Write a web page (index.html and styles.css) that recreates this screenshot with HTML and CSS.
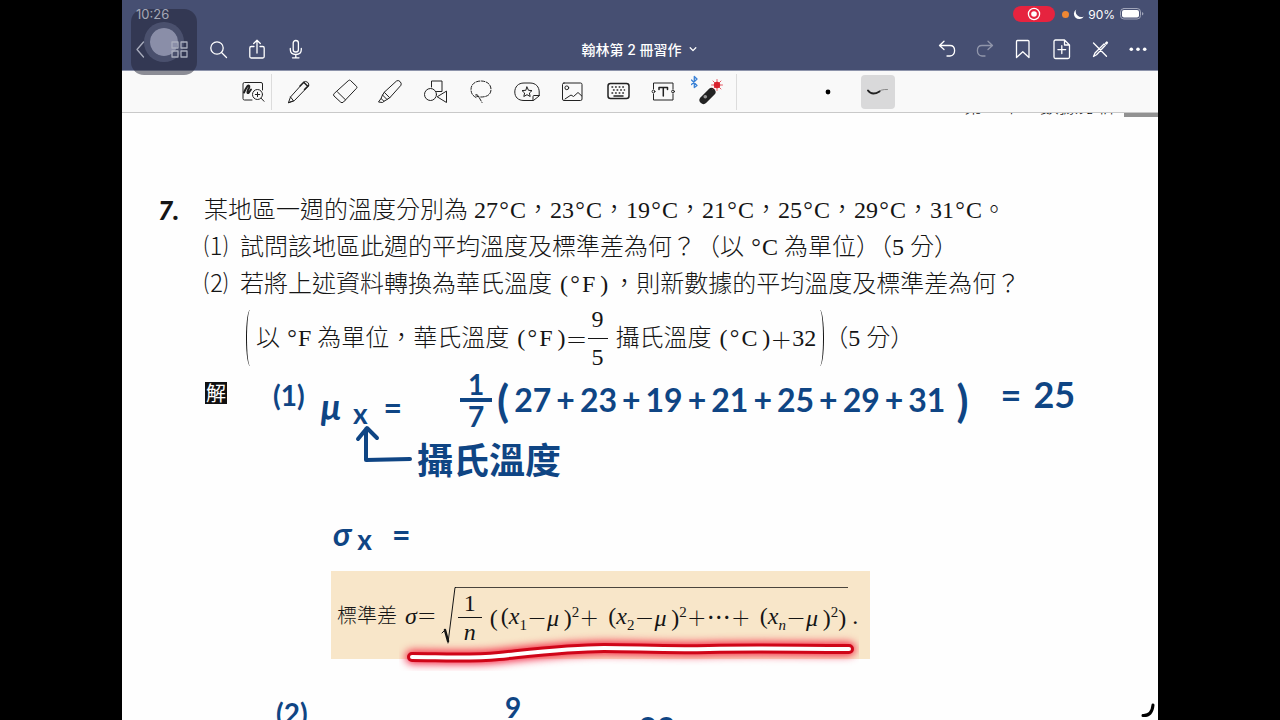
FILE: index.html
```html
<!DOCTYPE html>
<html lang="zh-Hant">
<head>
    <meta charset="UTF-8">
    <meta name="viewport" content="width=device-width, initial-scale=1.0">
    <title>翰林第2冊習作</title>
    <link rel="stylesheet" href="styles.css">
</head>
<body>
    <div class="tablet">
        <header class="topbar">
            <div class="status">
                <span>10:26</span>
                <div class="status-right">
                    <span class="recording">
                        <svg width="14" height="14" viewBox="0 0 14 14"><circle cx="7" cy="7" r="5.6" fill="none" stroke="#fff" stroke-width="1.3"/><circle cx="7" cy="7" r="2.8" fill="#fff"/></svg>
                    </span>
                    <span class="mic-dot"></span>
                    <svg class="moon" width="11" height="11" viewBox="0 0 11 11"><path d="M3.2 0.4A5.300 5.300 0 1 0 10.800 7.400A5.500 5.500 0 0 1 3.200 0.400Z" fill="#fff"/></svg>
                    <span>90%</span>
                    <svg class="battery" width="24" height="12" viewBox="0 0 24 12"><rect x="0.5" y="0.5" width="20" height="10.5" rx="3.4" fill="none" stroke="#a0a5b9"/><rect x="2" y="2" width="17" height="7.5" rx="2" fill="#fff"/><path d="M22 4v3.6q1.4-.5 1.4-1.8T22 4Z" fill="#a0a5b9"/></svg>
                </div>
            </div>
            <nav class="nav">
                <div class="nav-left">
                    <button aria-label="Back"><svg viewBox="0 0 24 24"><path d="M15.5 5L9 12.5L15.5 20"/></svg></button>
                    <button aria-label="Pages"><svg viewBox="0 0 24 24"><rect x="5" y="5" width="6" height="6"/><rect x="14" y="5" width="6" height="6"/><rect x="5" y="14" width="6" height="6"/><rect x="14" y="14" width="6" height="6"/></svg></button>
                    <button aria-label="Search"><svg viewBox="0 0 24 24"><circle cx="11" cy="11" r="6.2"/><path d="M15.5 15.5L20.5 20.5"/></svg></button>
                    <button aria-label="Share"><svg viewBox="0 0 24 24"><path d="M9 9.5H6.2Q4.8 9.5 4.8 11V19.5Q4.8 21 6.2 21H17.8Q19.2 21 19.2 19.5V11Q19.2 9.5 17.8 9.5H15M12 16V3.5M8.7 6.5L12 3.2L15.3 6.5"/></svg></button>
                    <button aria-label="Record"><svg viewBox="0 0 24 24"><rect x="9.2" y="3.5" width="5.2" height="11.5" rx="2.6"/><path d="M6.3 11.5V12.5Q6.3 17.5 11.8 17.5T17.3 12.5V11.5M11.8 17.5V20.5M8.5 20.8H15"/></svg></button>
                </div>
                <button class="doc-title">翰林第 2 冊習作 <svg width="8" height="8" viewBox="0 0 8 8"><path d="M1.2 2.8L4 5.6L6.8 2.8"/></svg></button>
                <div class="nav-right">
                    <button aria-label="Undo"><svg viewBox="0 0 24 24"><path d="M8 4.2L3.500 8.500L8 12.500M3.700 8.500H14Q18.600 8.500 18.600 13.500T14 19H11"/></svg></button>
                    <button aria-label="Redo" disabled><svg viewBox="0 0 24 24"><path d="M14 4.2L18.500 8.500L14 12.500M18.300 8.500H8Q3.400 8.500 3.400 13.500T8 19H11"/></svg></button>
                    <button aria-label="Bookmark"><svg viewBox="0 0 24 24"><path d="M4.500 4.500Q4.500 3.500 5.500 3.500H16Q17 3.500 17 4.500V20.500L10.800 14.800L4.500 20.500Z"/></svg></button>
                    <button aria-label="Add page"><svg viewBox="0 0 24 24"><path d="M14.5 3H5.5Q4 3 4 4.5V20Q4 21.5 5.5 21.5H18Q19.5 21.5 19.5 20V8ZM14.5 3V8H19.5M11.8 8.7V16.5M7.9 12.6H15.7"/></svg></button>
                    <button aria-label="Read only"><svg viewBox="0 0 24 24"><path d="M5.500 6L18.500 19.300M5.500 19.500L7 16L16 7L17.300 8.300L8.500 17.800ZM17.500 6.200L18.800 5L19.500 5.700L18.500 7"/></svg></button>
                    <button aria-label="More"><svg viewBox="0 0 24 24"><g class="solid"><circle cx="5.3" cy="12.2" r="1.8"/><circle cx="12" cy="12.2" r="1.8"/><circle cx="18.7" cy="12.2" r="1.8"/></g></svg></button>
                </div>
            </nav>
            <div class="assistive"><span></span></div>
        </header>

        <div class="tools">
            <div class="tool-zoom">
                <button aria-label="Zoom window"><svg viewBox="0 0 28 28"><path d="M23.500 12V6Q23.500 4.500 22 4.500H5.500Q4 4.500 4 6V20.500Q4 22 5.500 22H13"/><path class="thick" d="M5 14.500Q8.500 6.500 10 7.700Q11 8.500 9 12Q7.700 15.500 9.500 15L12 11.500"/><circle cx="18.500" cy="16.500" r="5"/><path d="M22.200 20.300L25 23.300M18.500 14.300V18.700M16.300 16.500H20.700"/></svg></button>
            </div>
            <div class="tool-list">
                <button aria-label="Pen"><svg viewBox="0 0 28 28"><path d="M3.500 24.500L5.500 19L18.500 4.500Q20.500 2.500 22.500 4.200T23.500 8L9.500 22.500ZM3.500 24.500L8.500 22.800L5.500 19"/><path class="medium" d="M15 8L19 4M19.500 11.500L23.500 7.500M19 4.500L22.500 8"/></svg></button>
                <button aria-label="Eraser"><svg viewBox="0 0 28 28"><path d="M17.500 2.500Q18.500 1.500 19.500 2.500L25.500 8.300Q26.500 9.300 25.500 10.300L12.500 24Q11 25.500 9.500 24L3 18Q1.800 17 3 15.700ZM6.500 14L14.500 21.800"/></svg></button>
                <button aria-label="Highlighter"><svg viewBox="0 0 28 28"><path d="M8.500 14L20.500 3Q22.200 1.800 24 3.500T25 7.200L14 19.500ZM8.500 14L6.500 17L11 21.500L14 19.500M6.500 17L5 20.500L8 23.300L11 21.500M5 20.500L2.500 24L6.500 24.500L8 23.300"/></svg></button>
                <button aria-label="Shapes"><svg viewBox="0 0 28 28"><path d="M9.5 9V3H20V13.500H14.500"/><circle cx="8.500" cy="16.500" r="6"/><path d="M24.500 13.500V24.500L15.500 19Z"/></svg></button>
                <button aria-label="Lasso"><svg viewBox="0 0 28 28"><path stroke-dasharray="3.500 1.500" d="M9 19.500Q4 17 4 11.500C4 6 8.500 3 14 3S24 6 24 11.500S19.500 19 14 19Q9 19 8.500 17Q9 15.500 11 17.500L15 24.500"/></svg></button>
                <button aria-label="Stickers"><svg viewBox="0 0 28 28"><path d="M20 22.500H11C5 22.500 1.800 19 1.800 14S5 5 11 5H17C23 5 26.200 9 26.200 14V17.500ZM20 22.500V18.500Q20 17.500 21 17.500H26.200M14 9L15.500 12.300L19 12.600L16.400 15L17.200 18.500L14 16.700L10.800 18.500L11.600 15L9 12.600L12.500 12.300Z"/></svg></button>
                <button aria-label="Image"><svg viewBox="0 0 28 28"><rect x="4.500" y="5" width="19.500" height="17.500" rx="1.500"/><circle cx="8.800" cy="9.800" r="1.900"/><path d="M7 21L13 17L15.500 18.500L20 14.500L23.800 18"/></svg></button>
                <button aria-label="Keyboard"><svg viewBox="0 0 28 28"><rect class="medium" x="4" y="5.500" width="21" height="15" rx="2.500"/><path class="medium" stroke-dasharray="0.600 3" d="M8 9H22M9.500 12H20.500M8 15H22"/><path class="medium" d="M10 18H19"/></svg></button>
                <button aria-label="Text"><svg viewBox="0 0 28 28"><path d="M4.500 11V5H24V11M4.500 16V22H24V16"/><circle cx="4.500" cy="13.500" r="1.400"/><circle cx="24" cy="13.500" r="1.400"/><path class="medium" d="M10 11.500V9.500H18.500V11.500M14.300 9.500V18"/></svg></button>
                <button class="laser" aria-label="Laser pointer"><svg viewBox="0 0 36 36"><path d="M0.500 6L6 11.500L3.300 13.500V2.500L6 5L0.500 10.500" stroke="#3b82d6" stroke-width="1.300"/><path d="M12.500 26L20.500 18" stroke="#232323" stroke-width="8"/><circle cx="14.300" cy="22.800" r="1.800" fill="#999" stroke="none"/><path d="M26 5.500V16.500M20.500 11H31.500M22 7L30 15M30 7L22 15" stroke="#e65a66"/><circle cx="26" cy="11" r="3.200" fill="#d9212d" stroke="none"/></svg></button>
            </div>
            <div class="tool-stroke">
                <button aria-label="Dot size"><svg viewBox="0 0 28 28"><circle cx="14" cy="14" r="2.400" fill="#000" stroke="none"/></svg></button>
                <button class="selected" aria-label="Stroke style"><svg viewBox="0 0 28 28"><path d="M13 15Q16 11 23.500 11.500" stroke="#888"/><path class="thick" d="M4 12.500Q8 18 15.500 13.500"/></svg></button>
            </div>
        </div>

        <main class="sheet">
            <div class="running-head"><span>第 1 章　數據分析</span><i></i></div>

            <section class="question">
                <div class="number">7.</div>
                <div class="body">
                    <p>某地區一週的溫度分別為 27<b>°</b>C，23<b>°</b>C，19<b>°</b>C，21<b>°</b>C，25<b>°</b>C，29<b>°</b>C，31<b>°</b>C。</p>
                    <p class="part"><span>⑴</span><span>試問該地區此週的平均溫度及標準差為何？（以 <b>°</b>C 為單位）（5 分）</span></p>
                    <p class="part"><span>⑵</span><span>若將上述資料轉換為華氏溫度<span class="unit">(<b>°</b>F&thinsp;)</span>，則新數據的平均溫度及標準差為何？</span></p>
                    <p class="formula-note">
                        <i class="big-paren"></i>
                        <span>以 <b>°</b>F 為單位，華氏溫度<span class="unit">(<b>°</b>F&thinsp;)</span></span>
                        <span class="math">＝</span>
                        <span class="fraction"><span>9</span><span>5</span></span>
                        <span class="celsius">攝氏溫度<span class="unit">(<b>°</b>C&thinsp;)</span></span>
                        <span class="math">＋</span>
                        <span>32</span>
                        <i class="big-paren close"></i>
                        <span>（5 分）</span>
                    </p>
                </div>
            </section>

            <section class="answer">
                <span class="solve">解</span>
                <div class="ink">
                    <div class="ink-row mean">
                        <span class="item">(1)</span>
                        <span class="symbol"><em>μ</em><sub>x</sub></span>
                        <span class="equals">=</span>
                        <span class="fraction"><span>1</span><span>7</span></span>
                        <span class="sum"><span class="tall">(</span><span>27</span><span>+</span><span>23</span><span>+</span><span>19</span><span>+</span><span>21</span><span>+</span><span>25</span><span>+</span><span>29</span><span>+</span><span>31</span><span class="tall close">)</span></span>
                        <span class="result"><span>=</span><span>25</span></span>
                    </div>
                    <div class="ink-row label">
                        <svg width="58" height="40" viewBox="0 0 58 40"><path d="M3 14L12 3L22 13M11 4V35L55 34"/></svg>
                        <span>攝氏溫度</span>
                    </div>
                    <div class="ink-row sigma">
                        <span class="symbol"><em>σ</em><sub>x</sub></span>
                        <span class="equals">=</span>
                    </div>
                </div>
            </section>

            <section class="formula">
                <span class="term">標準差</span>
                <em>σ</em>
                <span class="math">＝</span>
                <svg class="root" width="15" height="60" viewBox="0 0 15 60"><path d="M1 46L4 43" stroke-width="1"/><path d="M4 43L7 54" stroke-width="2.500"/><path d="M7 56L14 0.500H15" stroke-width="1"/></svg>
                <span class="radicand">
                    <span class="fraction"><span>1</span><span><em>n</em></span></span>
                    <span class="group">(</span>
                    <span class="group">(<em>x</em><sub>1</sub></span><span class="math">－</span><span><em>μ</em>&thinsp;)<sup>2</sup></span><span class="math">＋</span>
                    <span class="group wide">(<em>x</em><sub>2</sub></span><span class="math">－</span><span><em>μ</em>&thinsp;)<sup>2</sup></span><span class="math">＋</span><span>⋯</span><span class="math">＋</span>
                    <span class="group wide">(<em>x</em><sub><em>n</em></sub></span><span class="math">－</span><span><em>μ</em>&thinsp;)<sup>2</sup></span><span>)</span>
                </span>
                <span class="stop">.</span>
                <svg class="laser-line" width="460" height="40" viewBox="0 0 460 40">
                    <path class="glow" d="M13 26C40 26 70 28 100 25S170 17 205 17S260 19 310 18S400 18 450 18"/>
                    <path class="edge" d="M13 26C40 26 70 28 100 25S170 17 205 17S260 19 310 18S400 18 450 18"/>
                    <path class="core" d="M13 26C40 26 70 28 100 25S170 17 205 17S260 19 310 18S400 18 450 18"/>
                </svg>
            </section>

            <section class="ink ink-row next">
                <span class="item">(2)</span>
                <span class="symbol"><em>μ</em><sub>y</sub></span>
                <span class="equals">=</span>
                <span class="fraction"><span>9</span><span>5</span></span>
                <span class="symbol"><em>μ</em><sub>x</sub></span>
                <span class="plus">+</span>
                <span class="constant">32</span>
            </section>
            <svg class="page-curl" width="14" height="16" viewBox="0 0 14 16"><path d="M2 13.500Q11 14 12 3"/></svg>
        </main>
    </div>
</body>
</html>
```
FILE: styles.css
```css
* {
    box-sizing: border-box;
}

body {
    margin: 0;
    background: #000;
    font-family: "Liberation Serif", "Noto Sans CJK TC", serif;
    color: #151515;
}

.tablet {
    height: 100vh;
    margin: 0 122px;
    display: flex;
    flex-direction: column;
    background: #fefefe;
    overflow: hidden;
}

button {
    padding: 0;
    border: none;
    background: none;
    display: flex;
    align-items: center;
    justify-content: center;
    color: inherit;
}

svg {
    fill: none;
    stroke: currentColor;
    stroke-linecap: round;
    stroke-linejoin: round;
    flex: none;
}

/* top bar */
.topbar {
    position: relative;
    z-index: 1;
    background: #464f72;
    color: #fff;
    font-family: Inter, "Noto Sans CJK TC", sans-serif;
    border-bottom: 1px solid #8d94ab;
}

.status,
.nav {
    position: relative;
    z-index: 1;
}

.status {
    display: flex;
    justify-content: space-between;
    align-items: center;
    height: 28px;
    padding: 0 14px;
    font-size: 12px;
}

.status > span {
    font-size: 13px;
    color: #a4a7b5;
}

.status-right {
    display: flex;
    align-items: center;
}

.status-right svg {
    stroke: none;
}

.recording {
    display: flex;
    align-items: center;
    justify-content: center;
    width: 42px;
    height: 16px;
    margin-right: 7px;
    border-radius: 8px;
    background: #e6233f;
}

.mic-dot {
    width: 7px;
    height: 7px;
    margin-right: 4px;
    border-radius: 50%;
    background: #ef8733;
}

.moon {
    margin-right: 4px;
}

.battery {
    margin-left: 5px;
}

.nav {
    display: grid;
    grid-template-columns: 1fr auto 1fr;
    align-items: center;
    height: 42px;
    padding: 0 8px 0 6px;
}

.nav-left,
.nav-right {
    display: flex;
    gap: 15px;
}

.nav-right {
    gap: 14px;
    justify-content: flex-end;
}

.nav svg {
    stroke-width: 1.3;
}

.nav-left svg,
.nav-right svg {
    width: 24px;
    height: 24px;
}

.nav-left button:nth-child(-n+2) {
    color: #a9adbd;
}

.nav .solid {
    fill: #fff;
    stroke: none;
}

.nav button:disabled {
    opacity: 0.4;
}

.doc-title {
    gap: 7px;
    font-family: inherit;
    font-size: 14px;
    font-weight: 500;
}

.assistive {
    position: absolute;
    left: 9px;
    top: 9px;
    width: 66px;
    height: 66px;
    display: flex;
    align-items: center;
    justify-content: center;
    border-radius: 13px;
    background: rgba(32, 34, 52, 0.5);
}

.assistive span {
    width: 40px;
    height: 40px;
    border-radius: 50%;
    border: 6px solid rgba(110, 117, 150, 0.4);
    background: rgba(175, 179, 205, 0.7);
    background-clip: padding-box;
}

/* tool strip */
.tools {
    display: flex;
    align-items: center;
    flex: none;
    height: 42px;
    padding-left: 113px;
    background: #f9f9f9;
    border-bottom: 1px solid #c9c9c9;
    color: #222;
}

.tools button {
    width: 36px;
    height: 36px;
}

.tools svg {
    width: 28px;
    height: 28px;
}

.tools .thick {
    stroke-width: 2;
}

.tools .medium {
    stroke-width: 1.5;
}

.tool-zoom {
    border-right: 1px solid #dcdcdc;
}

.tool-list {
    display: flex;
    justify-content: space-between;
    flex: 0 0 465px;
    padding: 0 9px;
    border-right: 1px solid #dcdcdc;
}

.tools .laser svg {
    width: 36px;
    height: 36px;
}

.tool-stroke {
    display: flex;
    gap: 16px;
    margin-left: 74px;
}

.tool-stroke button {
    width: 34px;
    height: 34px;
    border-radius: 4px;
}

.tool-stroke .selected {
    background: #d9d9da;
}

/* worksheet */
.sheet {
    position: relative;
    flex: 1;
    min-height: 0;
    overflow: hidden;
}

.running-head {
    display: flex;
    justify-content: flex-end;
    gap: 8px;
    height: 4px;
    overflow: hidden;
    font-size: 19px;
    font-weight: 300;
    line-height: 20px;
}

.running-head span {
    align-self: flex-end;
}

.running-head i {
    width: 34px;
    background: #929292;
}

.question {
    display: grid;
    grid-template-columns: 46px 1fr;
    padding: 75px 0 0 36px;
    font-size: 24px;
    font-weight: 300;
    line-height: 37px;
    white-space: nowrap;
}

.question p {
    margin: 0;
}

.question b {
    display: inline-block;
    width: 12px;
    font-weight: inherit;
    text-align: center;
}

.number {
    font-family: Lato, sans-serif;
    font-size: 26px;
    font-weight: 900;
    font-style: italic;
}

.part {
    display: flex;
    gap: 12px;
}

.unit {
    padding: 0 4px 0 8px;
}

.question .unit b {
    width: 14px;
}

.math {
    font-family: "Noto Sans CJK TC", sans-serif;
    font-size: 22px;
    font-weight: 300;
}

.formula-note {
    display: flex;
    align-items: center;
    height: 70px;
    padding-left: 42px;
}

.formula-note .unit {
    padding: 0 0 0 8px;
}

.big-paren {
    width: 8px;
    height: 56px;
    margin-right: 2px;
    border-left: 1px solid #151515;
    border-radius: 50%;
}

.big-paren.close {
    margin-right: 0;
    border-left: none;
    border-right: 1px solid #151515;
}

.fraction {
    display: flex;
    flex-direction: column;
    align-items: center;
}

.fraction span + span {
    border-top: 1px solid currentColor;
}

.fraction > span {
    width: 100%;
    text-align: center;
}

.formula-note .fraction {
    width: 20px;
}

.celsius {
    margin-left: 8px;
}

.answer {
    display: grid;
    grid-template-columns: 22px 1fr;
    padding: 2px 0 0 83px;
}

.solve {
    width: 22px;
    height: 22px;
    margin-top: 7px;
    background: #111;
    color: #fff;
    font-family: "Noto Sans CJK TC", sans-serif;
    font-size: 20px;
    line-height: 21px;
    text-align: center;
}

/* blue pen notes */
.ink {
    color: #0f4584;
    font-family: Lato, "Noto Sans CJK TC", sans-serif;
    font-size: 32px;
    font-weight: 700;
    line-height: 32px;
    white-space: nowrap;
}

.ink svg {
    stroke-width: 4;
}

.ink sub {
    font-size: 28px;
    line-height: 28px;
    vertical-align: -4px;
}

.ink-row {
    display: flex;
    align-items: center;
}

.ink .item {
    align-self: flex-start;
    padding-top: 4px;
    font-size: 28px;
}

.ink .fraction {
    width: 32px;
    font-size: 28px;
    line-height: 28px;
}

.ink .fraction span + span {
    border-top-width: 4px;
}

.equals {
    margin-left: 12px;
}

.mean {
    height: 50px;
    margin-left: 46px;
}

.mean .symbol {
    margin: 16px 0 0 16px;
    font-size: 36px;
}

.mean .symbol sub {
    margin-left: 12px;
}

.mean .equals {
    margin: 16px 0 0 16px;
}

.mean .fraction {
    margin-left: 58px;
}

.sum {
    display: flex;
    align-items: center;
    gap: 5px;
    margin-left: 5px;
}

.tall {
    font-size: 44px;
    line-height: 44px;
}

.tall.close {
    margin-left: 6px;
}

.result {
    display: flex;
    gap: 12px;
    margin: -12px 0 0 32px;
    font-size: 36px;
}

.label {
    gap: 4px;
    height: 56px;
    margin-left: 128px;
    font-size: 36px;
}

.label svg {
    align-self: flex-start;
}

.label span {
    padding-top: 14px;
}

.sigma {
    height: 40px;
    margin: 34px 0 0 106px;
}

.sigma .symbol sub {
    margin-left: 6px;
}

.sigma .equals {
    margin-left: 20px;
}

/* printed formula */
.formula {
    position: relative;
    display: flex;
    align-items: center;
    width: 539px;
    height: 88px;
    margin: 16px 0 0 209px;
    padding: 2px 0 0 6px;
    background: #f8e6c9;
    font-size: 24px;
    line-height: 28px;
    white-space: nowrap;
}

.formula .term {
    margin-right: 8px;
    font-size: 20px;
    font-weight: 300;
}

.formula .math {
    font-size: 20px;
}

.formula .root {
    margin: 2px 0 0 4px;
}

.radicand {
    display: flex;
    align-items: center;
    height: 60px;
    margin-top: 2px;
    padding: 0 2px;
    border-top: 1px solid #4a443c;
}

.radicand .fraction {
    width: 24px;
    margin-right: 5px;
}

.radicand sub,
.radicand sup {
    font-size: 15px;
    line-height: 15px;
}

.radicand .group {
    margin-left: 3px;
}

.radicand .wide {
    margin-left: 9px;
}

.formula .stop {
    margin-left: 4px;
}

.laser-line {
    position: absolute;
    left: 68px;
    top: 60px;
}

.laser-line .glow {
    stroke: #f41c3c;
    stroke-width: 13;
    filter: blur(4px);
}

.laser-line .edge {
    stroke: #cf0518;
    stroke-width: 10;
}

.laser-line .core {
    stroke: #fff;
    stroke-width: 4;
}

.next {
    margin: 34px 0 0 154px;
}

.next .symbol,
.plus,
.constant {
    padding-top: 12px;
}

.next .symbol {
    margin-left: 78px;
}

.next .equals {
    padding-top: 12px;
}

.next .fraction {
    margin-left: 48px;
}

.next .fraction + .symbol {
    margin-left: 16px;
}

.plus {
    margin-left: 14px;
}

.constant {
    margin-left: 28px;
}

.page-curl {
    position: absolute;
    right: 3px;
    bottom: 2px;
    color: #000;
    stroke-width: 3;
}
```
